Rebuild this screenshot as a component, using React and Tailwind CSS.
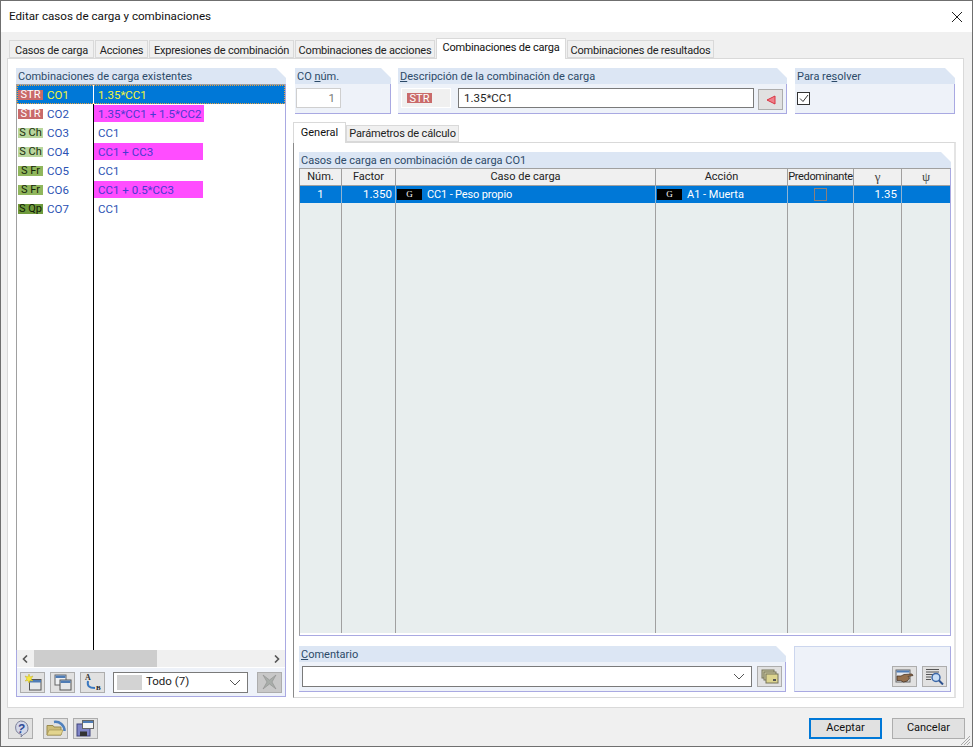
const font = "[font-family:'Roboto',sans-serif]";

const combos = [
  { tag: "STR", tagBg: "bg-[#c96a6a]", tagText: "text-[#fff]", co: "CO1", expr: "1.35*CC1", selected: true },
  { tag: "STR", tagBg: "bg-[#c96a6a]", tagText: "text-[#fff]", co: "CO2", expr: "1.35*CC1 + 1.5*CC2", pink: "w-[110px]" },
  { tag: "S Ch", tagBg: "bg-[#b9d69c]", tagText: "text-[#1c3010]", co: "CO3", expr: "CC1" },
  { tag: "S Ch", tagBg: "bg-[#b9d69c]", tagText: "text-[#1c3010]", co: "CO4", expr: "CC1 + CC3", pink: "w-[109px]" },
  { tag: "S Fr", tagBg: "bg-[#90b65c]", tagText: "text-[#16260a]", co: "CO5", expr: "CC1" },
  { tag: "S Fr", tagBg: "bg-[#90b65c]", tagText: "text-[#16260a]", co: "CO6", expr: "CC1 + 0.5*CC3", pink: "w-[109px]" },
  { tag: "S Qp", tagBg: "bg-[#6f9a3c]", tagText: "text-[#101c06]", co: "CO7", expr: "CC1" },
];

const Cols = ["w-[42px]", "w-[54px]", "w-[260px]", "w-[132px]", "w-[66px]", "w-[48px]", "w-[48px]"];

const Tab = ({ children, w, active }) => (
  <div className={`${w} ${active ? "h-[21px] mt-[1px] bg-white border-b-0 z-10 -mb-px text-[#111] pt-[1px]" : "h-[18px] bg-[#f0f0f0] mt-[3px] pt-[2px] text-[#222]"} border border-[#d9d9d9] text-center text-[11px] tracking-[-0.2px] leading-[15px] whitespace-nowrap`}>
    {children}
  </div>
);

const GroupHeader = ({ children }) => (
  <div className="h-[16px] shrink-0 bg-[#dce6f4] [clip-path:polygon(0_0,calc(100%-10px)_0,100%_10px,100%_100%,0_100%)] pl-[2px] pt-[1px] text-[11px] leading-[16px] text-[#2c4a68] whitespace-nowrap">
    {children}
  </div>
);

const IconBtn = ({ children, className = "" }) => (
  <div className={`w-[25px] h-[21px] shrink-0 bg-[#e1e1e1] border border-[#adadad] flex items-center justify-center ${className}`}>
    {children}
  </div>
);

const NewIcon = () => (
  <svg width="18" height="17" viewBox="0 0 18 17">
    <rect x="5.500" y="5.500" width="11.500" height="10.500" fill="#e6e8ea" stroke="#555" />
    <rect x="6" y="6" width="11" height="2.500" fill="#4f7cb5" />
    <path d="M5 0l1 3 3-1-2 3 2 2-3-.5L5 9 4 6.500 1 7l2-2-2-3 3 1z" fill="#f7e83a" stroke="#c4b02a" strokeWidth=".5" />
  </svg>
);

const CopyIcon = () => (
  <svg width="18" height="17" viewBox="0 0 18 17">
    <rect x="1" y="1" width="11" height="10" fill="#eef0f2" stroke="#666" />
    <rect x="1.500" y="1.500" width="10" height="2.500" fill="#4f7cb5" />
    <rect x="6" y="6" width="11" height="10" fill="#e6e8ea" stroke="#555" />
    <rect x="6.500" y="6.500" width="10" height="2.500" fill="#4f7cb5" />
  </svg>
);

const RenameIcon = () => (
  <svg width="20" height="19" viewBox="0 0 20 19">
    <text x="2" y="7" fontSize="8" fontWeight="700" fontFamily="Liberation Serif" fill="#333">A</text>
    <path d="M5 8c-1 5 1 7 7 7" fill="none" stroke="#3a78c0" strokeWidth="2" />
    <text x="13" y="17" fontSize="7" fontWeight="700" fontFamily="Liberation Serif" fill="#222">B</text>
  </svg>
);

const HelpIcon = () => (
  <svg width="17" height="18" viewBox="0 0 17 18">
    <path d="M8.500 1a7.500 7 0 0 1 3 13.400L9 17l.5-2.600A7.500 7 0 0 1 8.500 1z" fill="#d3d8ea" stroke="#7b7f98" />
    <text x="5.500" y="13" fontSize="12" fontWeight="700" fontStyle="italic" fontFamily="Liberation Sans" fill="#2f4a96">?</text>
  </svg>
);

const OpenIcon = () => (
  <svg width="20" height="17" viewBox="0 0 20 17">
    <path d="M8 2a9 9 0 0 1 10.500 9" fill="none" stroke="#4f80bd" strokeWidth="2.500" />
    <path d="M1 5.500h6l1 1.500h7v8H1z" fill="#cdbd78" stroke="#9a8b4e" />
    <path d="M1 15l2-5h14l-2 5z" fill="#e2d48e" stroke="#9a8b4e" strokeWidth=".6" />
  </svg>
);

const SaveIcon = () => (
  <svg width="19" height="17" viewBox="0 0 19 17">
    <rect x="1" y="4" width="13" height="12" fill="#7f84c6" stroke="#41457f" />
    <rect x="4" y="11.500" width="7" height="4.500" fill="#333" />
    <rect x="6.500" y="0.500" width="11" height="8" fill="#f5f5f5" stroke="#666" />
    <rect x="7" y="1" width="10" height="2" fill="#4f7cb5" />
  </svg>
);

const DeleteIcon = () => (
  <svg width="17" height="16" viewBox="0 0 17 16">
    <path d="M2 1l6.500 5L15 1l-4 7 4 7-6.500-5L2 15l4-7z" fill="#a8ada9" stroke="#8f8f8f" strokeWidth=".6" />
  </svg>
);

const CardsIcon = () => (
  <svg width="18" height="15" viewBox="0 0 18 15">
    <rect x="1" y="1" width="12" height="8" fill="#c9c6a0" stroke="#77745a" />
    <rect x="3" y="3" width="12" height="8" fill="#d4d0a6" stroke="#77745a" />
    <rect x="5" y="5" width="12" height="9" fill="#dcd48f" stroke="#77745a" />
    <rect x="12" y="10" width="3" height="2" fill="#555" />
  </svg>
);

const HandIcon = () => (
  <svg width="19" height="16" viewBox="0 0 19 16">
    <rect x="1" y="1" width="14" height="12" fill="#e6e9ee" stroke="#666" />
    <rect x="1.500" y="1.500" width="13" height="2" fill="#4f7cb5" />
    <path d="M2 7h4l3-1.500 8-.5 1 1.500-5 1 1.500 1.500-1 1.500-1 1.500-4 1-3-1.500H2z" fill="#94704e" stroke="#3d2a1b" strokeWidth=".7" />
  </svg>
);

const SearchListIcon = () => (
  <svg width="19" height="17" viewBox="0 0 19 17">
    <path d="M1 1.500h13M1 4h13M1 6.500h7M1 9h5M1 11.500h5" stroke="#555" />
    <circle cx="11" cy="9.500" r="4" fill="#c8def5" stroke="#3c68a8" strokeWidth="1.500" />
    <path d="M14 12.500l4 4" stroke="#2f5390" strokeWidth="2" />
  </svg>
);

const ComboBox = ({ className = "", children }) => (
  <div className={`h-[21px] bg-white border border-[#7a7a7a] flex items-center ${className}`}>
    {children}
    <svg className="ml-auto mr-[6px] shrink-0" width="12" height="7" viewBox="0 0 12 7">
      <path d="M1 1l5 5 5-5" fill="none" stroke="#555" />
    </svg>
  </div>
);

export default function App() {
  return (
    <div className={`${font} w-[973px] h-[747px] overflow-hidden flex flex-col border border-[#6f6f6f] bg-[#f0f0f0] text-[#222]`}>
      {/* titulo */}
      <div className="h-[31px] shrink-0 bg-white flex items-center pl-[8px] pr-[8px] text-[11.65px] text-[#111]">
        <span>Editar casos de carga y combinaciones</span>
        <svg className="ml-auto mr-[1px]" width="12" height="12" viewBox="0 0 12 12">
          <path d="M1 1l10 10M11 1L1 11" stroke="#222" />
        </svg>
      </div>

      <div className="flex-1 min-h-0 flex flex-col pl-[6px] pr-[8px] pt-[5px]">
        {/* pestanas */}
        <div className="flex h-[21px] shrink-0 pl-[2px] gap-px">
          <Tab w="w-[85px]">Casos de carga</Tab>
          <Tab w="w-[53px]">Acciones</Tab>
          <Tab w="w-[145px]">Expresiones de combinación</Tab>
          <Tab w="w-[140px]">Combinaciones de acciones</Tab>
          <Tab w="w-[130px]" active>Combinaciones de carga</Tab>
          <Tab w="w-[147px]">Combinaciones de resultados</Tab>
        </div>

        <div className="h-[650px] shrink-0 bg-white border border-[#d9d9d9] flex pl-[8px] pt-[9px] gap-[7px]">
          {/* lista izquierda */}
          <div className="w-[270px] h-[629px] shrink-0 flex flex-col">
            <GroupHeader>Combinaciones de carga existentes</GroupHeader>
            <div className="flex-1 min-h-0 flex flex-col border border-[#a9a9e2] border-t-0 bg-[#eef2f9]">
              <div className="flex-1 min-h-0 bg-white border-t border-l -ml-px border-[#a0a0a0] relative flex flex-col">
                <div className="absolute left-[76px] top-0 bottom-0 w-[1px] bg-black" />
                {combos.map((c) => (
                  <div key={c.co} className={`relative h-[19px] shrink-0 flex items-center text-[11.5px] ${c.selected ? "bg-[#0078d7] outline-1 -outline-offset-1 outline-dotted outline-[#e8a040] text-[#f4f43a]" : "text-[#2b52b3]"}`}>
                    <div className="w-[77px] shrink-0 flex items-center pl-[1px]">
                      <span className={`w-[25px] h-[10px] flex items-center justify-center text-[11px] leading-none ${c.tagBg} ${c.tagText}`}>{c.tag}</span>
                      <span className="ml-[4px] pt-[2px]">{c.co}</span>
                    </div>
                    {c.selected && <div className="w-[1px] h-full bg-white absolute left-[76px]" />}
                    <div className={`h-[17px] flex items-center pl-[4px] pt-[2px] ${c.pink ? `${c.pink} bg-[#ff4dff] text-[#4a3ad0]` : ""} whitespace-nowrap`}>
                      {c.expr}
                    </div>
                  </div>
                ))}
              </div>
              {/* barra de desplazamiento */}
              <div className="h-[17px] shrink-0 bg-[#f0f0f0] flex items-center relative">
                <svg className="ml-[5px]" width="6" height="8" viewBox="0 0 6 8"><path d="M5 .5L1.500 4 5 7.500" fill="none" stroke="#555" strokeWidth="1.600" /></svg>
                <div className="ml-[6px] w-[123px] h-full bg-[#cdcdcd]" />
                <svg className="ml-auto mr-[5px]" width="6" height="8" viewBox="0 0 6 8"><path d="M1 .5L4.500 4 1 7.500" fill="none" stroke="#555" strokeWidth="1.600" /></svg>
              </div>
              <div className="h-[29px] shrink-0 flex items-center pl-[3px] border-t border-white">
                <IconBtn><NewIcon /></IconBtn>
                <IconBtn className="ml-[5px]"><CopyIcon /></IconBtn>
                <IconBtn className="ml-[5px]"><RenameIcon /></IconBtn>
                <ComboBox className="ml-[8px] w-[135px] text-[#222]">
                  <span className="ml-[3px] w-[25px] h-[15px] bg-[#d3d3d3]" />
                  <span className="ml-[4px] text-[11.5px]">Todo (7)</span>
                </ComboBox>
                <IconBtn className="ml-[9px] !bg-[#c8c8c8]"><DeleteIcon /></IconBtn>
              </div>
            </div>
          </div>

          {/* derecha */}
          <div className="w-[663px] h-[630px] shrink-0 flex flex-col">
            <div className="flex h-[46px] shrink-0 pl-[2px]">
              <div className="w-[96px] flex flex-col">
                <GroupHeader>CO <span className="underline">n</span>úm.</GroupHeader>
                <div className="flex-1 bg-[#eef2f9] border-r border-b border-[#a9a9e2] pl-[1px] pt-[4px]">
                  <div className="w-[45px] h-[20px] bg-white border border-[#cfcfcf] text-right pr-[5px] text-[11.5px] leading-[18px] text-[#777]">1</div>
                </div>
              </div>
              <div className="w-[389px] ml-[7px] flex flex-col">
                <GroupHeader><span className="underline">D</span>escripción de la combinación de carga</GroupHeader>
                <div className="flex-1 bg-[#eef2f9] border-r border-b border-[#a9a9e2] pl-[3px] pt-[4px] flex items-start">
                  <div className="w-[50px] h-[20px] bg-[#f0f0f0] border border-white flex items-center pl-[5px]">
                    <span className="w-[25px] h-[10px] bg-[#c96a6a] text-white text-[11px] leading-none flex items-center justify-center">STR</span>
                  </div>
                  <div className="ml-[7px] w-[296px] h-[20px] bg-white border border-[#7a7a7a] pl-[5px] text-[11.5px] leading-[18px] text-[#222]">1.35*CC1</div>
                  <IconBtn className="ml-[4px] mt-[1px]">
                    <svg width="10" height="10" viewBox="0 0 10 10"><path d="M9 1L1 5l8 4z" fill="#f0808a" stroke="#d83442" /></svg>
                  </IconBtn>
                </div>
              </div>
              <div className="w-[160px] ml-[8px] flex flex-col">
                <GroupHeader>Para re<span className="underline">s</span>olver</GroupHeader>
                <div className="flex-1 bg-[#eef2f9] border-r border-b border-[#a9a9e2] pl-[2px] pt-[8px]">
                  <div className="w-[13px] h-[13px] bg-white border border-[#333] flex items-center justify-center">
                    <svg width="10" height="9" viewBox="0 0 10 9"><path d="M1 4.500l3 3L9 1" fill="none" stroke="#333" /></svg>
                  </div>
                </div>
              </div>
            </div>

            {/* pestanas internas */}
            <div className="flex h-[20px] mt-[8px] shrink-0 text-[11px] whitespace-nowrap">
              <div className="w-[53px] h-[21px] pt-[1px] bg-white border border-[#d9d9d9] border-b-0 text-center leading-[17px] text-[#111] z-10">General</div>
              <div className="w-[113px] h-[17px] mt-[3px] bg-[#f0f0f0] border border-[#d9d9d9] text-center tracking-[-0.15px] leading-[16px] text-[#222]">Parámetros de cálculo</div>
            </div>

            <div className="flex-1 min-h-0 border-l border-l-[#8a8a8a] border-t border-t-[#d9d9d9] border-r-2 border-r-[#e4e4e4] border-b border-b-[#d9d9d9] pl-[5px] pt-[9px] flex flex-col">
              <div className="w-[652px] h-[484px] shrink-0 flex flex-col">
                <GroupHeader>Casos de carga en combinación de carga CO1</GroupHeader>
                <div className="flex-1 min-h-0 flex flex-col border-r border-b border-[#a9a9e2] border-l border-l-[#a0a0a0] border-t border-t-[#a0a0a0] bg-white pb-[2px] text-[11px]">
                  <div className="flex h-[17px] shrink-0 bg-[#f0f0f0] border-b border-[#a0a0a0] text-[#222] leading-[15px]">
                    {["Núm.", "Factor", "Caso de carga", "Acción", "Predominante", "γ", "ψ"].map((h, i) => (
                      <div key={h} className={`${Cols[i]} shrink-0 border-r border-[#a0a0a0] last:border-r-0 text-center whitespace-nowrap ${i === 4 ? "tracking-[-0.35px]" : ""} ${i > 4 ? "[font-family:'Liberation_Serif',serif] text-[13px] text-[#444]" : ""}`}>{h}</div>
                    ))}
                  </div>
                  <div className="flex h-[17px] shrink-0 bg-[#0078d7] text-white leading-[17px]">
                    <div className={`${Cols[0]} shrink-0 border-r border-[#8fb4d4] text-center text-[11.5px]`}>1</div>
                    <div className={`${Cols[1]} shrink-0 border-r border-[#8fb4d4] text-right pr-[3px] text-[11.5px]`}>1.350</div>
                    <div className={`${Cols[2]} shrink-0 border-r border-[#8fb4d4] flex items-center pl-[1px]`}>
                      <span className="w-[25px] h-[11px] bg-black text-[9px] leading-[11px] text-center [font-family:'Liberation_Serif',serif]">G</span>
                      <span className="ml-[5px] tracking-[-0.15px]">CC1 - Peso propio</span>
                    </div>
                    <div className={`${Cols[3]} shrink-0 border-r border-[#8fb4d4] flex items-center pl-[1px]`}>
                      <span className="w-[25px] h-[11px] bg-black text-[9px] leading-[11px] text-center [font-family:'Liberation_Serif',serif]">G</span>
                      <span className="ml-[5px]">A1 - Muerta</span>
                    </div>
                    <div className={`${Cols[4]} shrink-0 border-r border-[#8fb4d4] flex items-center justify-center`}>
                      <span className="w-[13px] h-[13px] border border-[#8f8078]" />
                    </div>
                    <div className={`${Cols[5]} shrink-0 border-r border-[#8fb4d4] text-right pr-[4px] text-[11.5px]`}>1.35</div>
                    <div className={`${Cols[6]} shrink-0`} />
                  </div>
                  <div className="flex flex-1 min-h-0 bg-[#e8eeee]">
                    {Cols.map((w, i) => (
                      <div key={i} className={`${w} shrink-0 border-r border-[#a0a0a0] last:border-r-0`} />
                    ))}
                  </div>
                </div>
              </div>

              <div className="flex mt-[10px] h-[46px] shrink-0">
                <div className="w-[487px] flex flex-col">
                  <GroupHeader><span className="underline">C</span>omentario</GroupHeader>
                  <div className="flex-1 bg-[#eef2f9] border-r border-b border-[#a9a9e2] pl-[3px] pt-[4px] flex items-start">
                    <ComboBox className="w-[450px]" />
                    <IconBtn className="ml-[5px]"><CardsIcon /></IconBtn>
                  </div>
                </div>
                <div className="w-[157px] ml-[8px] bg-[#eef2f9] border border-[#ccd6ee] border-r-[#a9a9e2] border-b-[#a9a9e2] flex items-start justify-end pt-[19px] pr-[3px] gap-[5px]">
                  <IconBtn><HandIcon /></IconBtn>
                  <IconBtn><SearchListIcon /></IconBtn>
                </div>
              </div>
            </div>
          </div>
        </div>

        {/* pie */}
        <div className="flex-1 min-h-0 flex items-start pt-[10px] pl-[1px] relative">
          <IconBtn><HelpIcon /></IconBtn>
          <IconBtn className="ml-[10px]"><OpenIcon /></IconBtn>
          <IconBtn className="ml-[5px]"><SaveIcon /></IconBtn>
          <div className="ml-auto mr-[-1px] flex gap-[10px] text-[11px] text-[#111]">
            <div className="w-[73px] h-[21px] bg-[#e1e1e1] border-2 border-[#0078d7] flex items-center justify-center">Aceptar</div>
            <div className="w-[73px] h-[21px] bg-[#e1e1e1] border border-[#adadad] flex items-center justify-center">Cancelar</div>
          </div>
          <svg className="absolute right-[-7px] bottom-0" width="12" height="12" viewBox="0 0 12 12">
            <path d="M11 2L2 11M11 5l-6 6M11 8l-3 3" stroke="#a8a8a8" />
          </svg>
        </div>
      </div>
    </div>
  );
}
